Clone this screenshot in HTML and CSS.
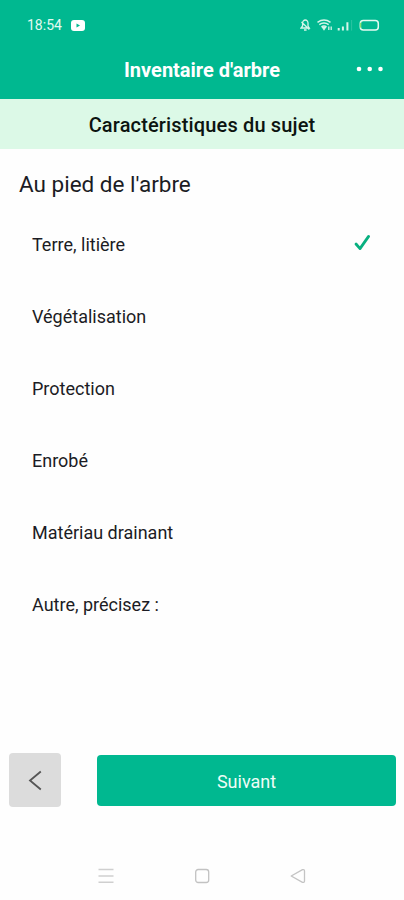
FILE: index.html
```
<!DOCTYPE html>
<html lang="fr">
<head>
    <meta charset="UTF-8">
    <meta name="viewport" content="width=device-width, initial-scale=1.0">
    <title>Inventaire d'arbre</title>
    <link rel="stylesheet" href="styles.css">
</head>
<body>

    <header>
        <div class="status">
            <span class="heure">18:54</span>
            <svg class="video" width="14" height="11" viewBox="0 0 14 11"><rect width="14" height="11" rx="3" fill="#fff"/><path d="M5.5 3.5L9 5.5L5.5 7.5Z" fill="#00b890"/></svg>
            <svg class="icones" width="80" height="14" viewBox="0 0 80 14" fill="none" stroke="#d5f5e9" stroke-width="1.3">
                <!-- cloche -->
                <path d="M1 10H9.3L8 8V5A2.7 3 0 0 0 2.6 5V8ZM4 12H6.6M1.5 4L9.3 11.5"/>
                <!-- wifi -->
                <path d="M17.5 4.4Q24 -.2 30.5 4.4M19.3 6.6Q24 3.4 28.7 6.6M21.5 8.8Q24 7 26.5 8.8" stroke-width="1.5"/>
                <path d="M22.6 9.5H25.4L24 11.5Z"/>
                <path d="M28.8 8.5V12M31.2 8.5V12"/>
                <!-- réseau -->
                <path d="M38.7 10V12.6M42.9 8.6V12.6M47.4 4.2V12.6" stroke-width="2"/>
                <path d="M51.6 2V12.6" stroke-width="1" opacity=".2"/>
                <!-- batterie -->
                <rect x="60.3" y="2.4" width="18" height="9.6" rx="3" stroke="#e4faf1" stroke-width="1.5"/>
                <path d="M60.6 4.8V9.6" stroke="#8ee06c"/>
            </svg>
        </div>
        <div class="titre">
            <h1>Inventaire d'arbre</h1>
            <svg class="menu" width="28" height="6" viewBox="0 0 28 6" fill="#fff"><circle cx="3" cy="3" r="2.3"/><circle cx="13.7" cy="3" r="2.3"/><circle cx="24.5" cy="3" r="2.3"/></svg>
        </div>
    </header>

    <h2>Caractéristiques du sujet</h2>

    <main>
        <h3>Au pied de l'arbre</h3>
        <ul class="liste">
            <li>
                <span>Terre, litière</span>
                <svg class="coche" width="17" height="18" viewBox="0 0 17 18" fill="none" stroke="#08b080" stroke-width="2.8" stroke-linecap="round" stroke-linejoin="round"><path d="M2 10L6 14.6L14.6 2.4"/></svg>
            </li>
            <li><span>Végétalisation</span></li>
            <li><span>Protection</span></li>
            <li><span>Enrobé</span></li>
            <li><span>Matériau drainant</span></li>
            <li><span>Autre, précisez :</span></li>
        </ul>
    </main>

    <div class="actions">
        <button class="retour" aria-label="Retour">
            <svg width="14" height="22" viewBox="0 0 14 22" fill="none" stroke="#555" stroke-width="1.8"><path d="M12.8 2.5L2 11.5L12.8 20.5"/></svg>
        </button>
        <button class="suivant">Suivant</button>
    </div>

    <nav>
        <svg width="16" height="16" viewBox="0 0 16 16" fill="none" stroke="#cfcfcf" stroke-width="1.5"><path d="M.5 1.5H15.5M.5 8H15.5M.5 14.3H15.5"/></svg>
        <svg width="16" height="16" viewBox="0 0 16 16" fill="none" stroke="#c2c2c2" stroke-width="1.3"><rect x="1.7" y="1.5" width="13" height="13" rx="2.5"/></svg>
        <svg width="16" height="16" viewBox="0 0 16 16" fill="none" stroke="#c4c4c4" stroke-width="1.3" stroke-linejoin="round"><path d="M1.2 8L12.5 1.6Q14.5 1.2 14.5 3V13Q14.5 14.8 12.5 14.4Z"/></svg>
    </nav>

</body>
</html>
```

FILE: styles.css
```
* { box-sizing: border-box; }
body { font-family: Roboto, Arial, sans-serif; margin: 0; height: 900px; display: flex; flex-direction: column; background: #fefefe; color: #1c1c24; }
h1, h2, h3, ul { margin: 0; padding: 0; font-weight: normal; }
svg { display: block; flex-shrink: 0; }

header { height: 99px; background: #00b890; color: #fff; }
.status { height: 40px; padding: 10px 24px 0 27px; display: flex; align-items: center; }
.heure { font-size: 14px; color: #e4faf1; }
.video { margin-left: 9px; }
.icones { margin-left: auto; }
.titre { height: 59px; padding: 0 20px 0 48px; display: flex; align-items: center; }
.menu { margin-top: -2px; }
h1 { flex: 1; text-align: center; font-size: 20px; font-weight: bold; }

h2 { height: 50px; line-height: 53px; background: #dcf9e7; color: #0c1410; text-align: center; font-size: 20px; font-weight: 500; letter-spacing: 0.15px; }

main { flex: 1; padding: 19px 33px 0 19px; }
h3 { font-size: 22.5px; line-height: 32px; }
.liste { list-style: none; padding-left: 13px; margin-top: 8px; }
.liste li { height: 72px; display: flex; align-items: center; justify-content: space-between; font-size: 18px; }
.coche { margin-top: -3px; }

.actions { height: 54px; padding: 0 8px 0 9px; display: flex; justify-content: space-between; align-items: center; }
button { border: none; border-radius: 4px; padding: 0; font-family: inherit; }
.retour { width: 52px; height: 54px; background: #dcdcdc; display: flex; align-items: center; justify-content: center; }
.suivant { width: 299px; height: 51px; padding-top: 2px; background: #00b890; color: #effdf7; font-size: 18px; }

nav { height: 93px; padding: 61px 98px 0; display: flex; justify-content: space-between; align-items: flex-start; }
```
